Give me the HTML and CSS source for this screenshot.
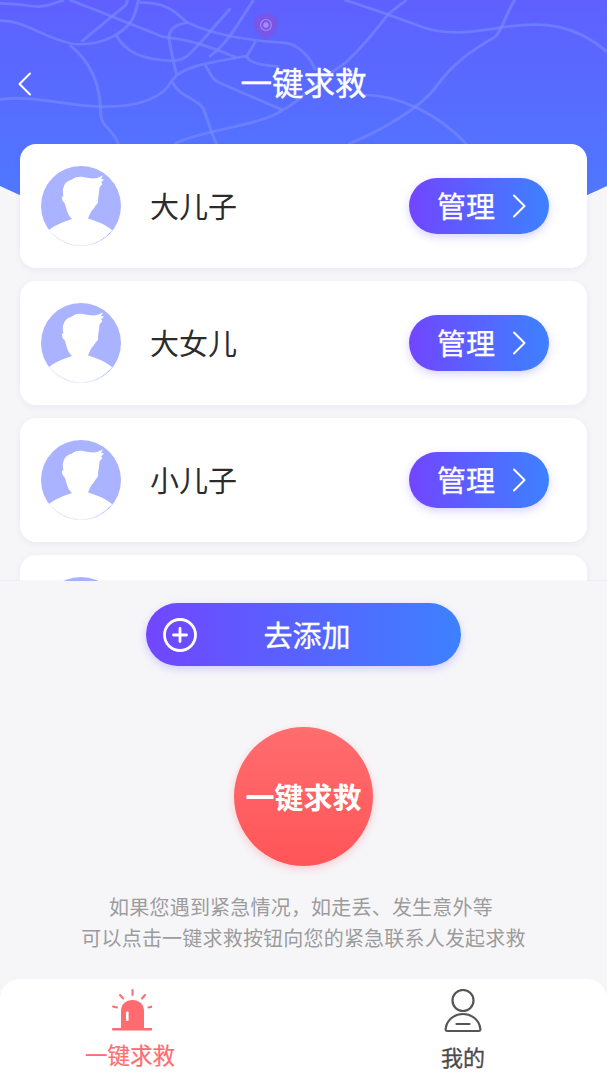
FILE: index.html
```html
<!DOCTYPE html>
<html>
<head>
    <meta charset="utf-8">
    <title>一键求救</title>
    <link rel="stylesheet" href="styles.css">
</head>
<body>
<svg class="defs" width="0" height="0">
    <defs>
        <symbol id="avatar" viewBox="0 0 80 80">
            <circle cx="40" cy="40" r="40" fill="#a9b3ff"/>
            <path fill="#fff" d="M8 64C13 60 21 56 31 53C29 51 27.500 49 26.500 46.500C25.500 43 24.500 39.500 23.500 37C22 36 21 34 21 32C21 30.500 21.500 30 22.500 30.500C21.500 27 21.500 23 23 20C24.500 16 27.500 14.500 31 13.500C34 11 38 10.500 42 11C47 12 52 13 56 12L62 9.500L60 13L63 13.500L60 16.500L61.500 18L58.500 21.500L58 27C57.500 29.500 57 32 57 34.500C57.500 36 56.500 38 55 39C53.500 41.500 52 43.500 50.500 45C49 47.500 48 50 47 52.500C56 55 65 59 71 64C62 74 52 79.500 40 79.500C28 79.500 17 74 8 64Z"/>
            <path fill="none" stroke="#f1f2ff" d="M8 64C17 74 28 79.500 40 79.500C52 79.500 62 74 71 64"/>
        </symbol>
        <symbol id="chevron" viewBox="0 0 14 24">
            <path d="M2 1.500L12.500 12L2 22.500" fill="none" stroke="#fff" stroke-width="2" stroke-linecap="round" stroke-linejoin="round"/>
        </symbol>
    </defs>
</svg>

<div class="page">
    <div class="hero">
        <svg class="map" viewBox="0 0 1568 600" preserveAspectRatio="none">
            <g fill="none" stroke="#7688ff" stroke-width="8" stroke-opacity=".7">
                <path d="M0 10C40 10 70 18 100 20C130 18 150 5 165 0"/>
                <path d="M0 62C70 62 110 115 190 132C260 138 340 100 352 25L358 0"/>
                <path d="M0 298C100 285 170 320 270 320C360 320 420 295 445 240C470 200 530 190 637 168"/>
                <path d="M180 0C240 25 330 70 420 110C480 120 510 125 610 172"/>
                <path d="M360 8C420 5 450 30 480 65C540 100 620 120 730 128C770 130 800 170 815 210"/>
                <path d="M655 0C620 60 590 130 540 170"/>
                <path d="M210 125L325 15L330 0"/>
                <path d="M300 105C320 150 360 180 440 182C480 185 490 160 520 125L595 25"/>
                <path d="M485 68C440 75 435 100 437 120C445 170 450 200 457 225"/>
                <path d="M445 245C460 290 510 295 525 325C540 370 545 400 560 432"/>
                <path d="M180 135C240 190 260 260 260 340C260 380 295 390 305 432"/>
                <path d="M660 125L637 170C650 195 690 195 720 200"/>
                <path d="M530 195C550 235 550 240 570 250L730 330"/>
                <path d="M450 432C520 390 680 375 730 330C770 310 800 260 890 190C940 140 970 90 1005 40L1050 0"/>
                <path d="M890 0C960 25 1030 55 1100 85C1170 110 1250 90 1310 80C1400 65 1480 70 1568 155"/>
                <path d="M1330 0C1310 30 1300 85 1280 110C1220 150 1170 190 1130 255C1090 320 990 390 900 432"/>
                <path d="M940 285C1030 285 1130 340 1205 432"/>
            </g>
            <path fill="#8a4fd8" fill-opacity=".6" d="M687 40C665 40 656 58 656 75C656 92 675 108 687 122C699 108 718 92 718 75C718 58 709 40 687 40Z"/>
            <ellipse cx="687" cy="75" rx="14" ry="16.500" fill="none" stroke="#a98af0" stroke-width="3"/>
            <ellipse cx="687" cy="75" rx="7" ry="8" fill="#a98af0"/>
        </svg>
    </div>

    <header class="topbar">
        <svg class="back" width="14" height="24"><use href="#chevron" transform="matrix(-1 0 0 1 14 0)"/></svg>
        <h1 class="title">一键求救</h1>
    </header>

    <div class="list">
        <div class="card">
            <svg class="avatar"><use href="#avatar"/></svg>
            <span class="name">大儿子</span>
            <a class="manage">管理<svg class="arrow"><use href="#chevron"/></svg></a>
        </div>
        <div class="card">
            <svg class="avatar"><use href="#avatar"/></svg>
            <span class="name">大女儿</span>
            <a class="manage">管理<svg class="arrow"><use href="#chevron"/></svg></a>
        </div>
        <div class="card">
            <svg class="avatar"><use href="#avatar"/></svg>
            <span class="name">小儿子</span>
            <a class="manage">管理<svg class="arrow"><use href="#chevron"/></svg></a>
        </div>
        <div class="card">
            <svg class="avatar"><use href="#avatar"/></svg>
        </div>
    </div>

    <div class="panel">
        <button class="add">
            <svg class="add-icon" width="34" height="34" viewBox="0 0 34 34">
                <circle cx="17" cy="17" r="15.500" fill="none" stroke="#fff" stroke-width="2.800"/>
                <path d="M17 10.500V23.500M10.500 17H23.500" stroke="#fff" stroke-width="2.800" stroke-linecap="round"/>
            </svg>
            <span class="add-label">去添加</span>
        </button>
        <button class="sos">一键求救</button>
        <p class="tip"><span class="tip-first">如果您遇到紧急情况，如走丢、发生意外等</span>可以点击一键求救按钮向您的紧急联系人发起求救</p>
    </div>

    <nav class="tabs">
        <div class="tab active">
            <svg class="tab-icon" width="44" height="44" viewBox="-4 0 44 44">
                <path fill="#ff6b6f" d="M9 40V22C9 15 14 11 20.500 11C27 11 32 15 32 22V40Z"/>
                <rect x="0" y="39" width="42" height="2.400" rx="1" fill="#ff6b6f"/>
                <rect x="14" y="22.500" width="2.600" height="9.500" rx="1" fill="#fff"/>
                <path d="M20.500 1V6M8 6L11 9.500M33 6L30 9.500M1 17.500L5 18.500M40.500 17.500L36.500 18.500" stroke="#ff6b6f" stroke-width="2" stroke-linecap="round"/>
            </svg>
            <span class="tab-label">一键求救</span>
        </div>
        <div class="tab">
            <svg class="tab-icon" width="44" height="44" viewBox="0 0 44 44">
                <circle cx="22" cy="11.500" r="10.500" fill="none" stroke="#555" stroke-width="2.200"/>
                <path d="M6 42C4.500 42 4.500 40.500 4.800 39C6 31 13 25 22 25C31 25 38 31 39.200 39C39.500 40.500 39.500 42 38 42Z" fill="none" stroke="#555" stroke-width="2.200" stroke-linejoin="round"/>
                <path d="M15.500 35H28.500" stroke="#555" stroke-width="2.200" stroke-linecap="round"/>
            </svg>
            <span class="tab-label">我的</span>
        </div>
    </nav>
</div>
</body>
</html>
```

FILE: styles.css
```css
* {
    box-sizing: border-box;
}

html, body {
    margin: 0;
    padding: 0;
}

body {
    font-family: "Noto Sans CJK SC", "Noto Sans", sans-serif;
    background-color: #f6f6f9;
    overflow: hidden;
}

.defs {
    display: block;
    height: 0;
}

.page {
    position: relative;
    width: 607px;
    height: 1080px;
    overflow: hidden;
    display: flex;
    flex-direction: column;
}

.hero {
    position: absolute;
    top: 0;
    left: -100px;
    width: 807px;
    height: 244px;
    border-radius: 0 0 403px 403px / 0 0 170px 170px;
    background: linear-gradient(180deg, #5f60ff 0%, #4e79ff 85%);
    overflow: hidden;
}

.map {
    position: absolute;
    top: 0;
    left: 100px;
    width: 607px;
    height: 200px;
}

.topbar {
    position: relative;
    height: 144px;
    flex: none;
    display: flex;
    justify-content: center;
    padding-top: 58px;
}

.back {
    position: absolute;
    left: 18px;
    top: 72px;
}

.title {
    margin: 0;
    color: #fff;
    font-size: 31.500px;
    font-weight: 400;
    -webkit-text-stroke: .4px #fff;
    line-height: 46px;
}

.list {
    position: relative;
    height: 437px;
    flex: none;
    padding: 0 20px;
    overflow: hidden;
}

.card {
    height: 124px;
    margin-bottom: 13px;
    padding: 0 38px 0 21px;
    display: flex;
    align-items: center;
    background-color: #fff;
    border-radius: 16px;
    box-shadow: 0 2px 6px rgba(90, 90, 140, .08);
}

.avatar {
    width: 80px;
    height: 80px;
    flex: none;
}

.name {
    flex: 1;
    margin-left: 29px;
    padding-bottom: 3px;
    color: #2b2b2b;
    font-size: 29px;
}

.manage {
    width: 140px;
    height: 56px;
    padding: 0 0 3px 28px;
    display: flex;
    align-items: center;
    color: #fff;
    font-size: 29px;
    -webkit-text-stroke: .3px #fff;
    border-radius: 28px;
    background: linear-gradient(90deg, #7146ff, #3d81ff);
    box-shadow: 0 3px 8px rgba(100, 80, 255, .25);
}

.arrow {
    width: 14px;
    height: 24px;
    margin: 3px 0 0 17px;
}

.panel {
    position: relative;
    height: 398px;
    flex: none;
    padding-top: 22px;
    display: flex;
    flex-direction: column;
    align-items: center;
    background-color: #f6f6f9;
    box-shadow: 0 -1px 1px rgba(90, 90, 140, .04);
}

.add {
    width: 315px;
    height: 63px;
    padding: 0 44px 2px 17px;
    display: flex;
    align-items: center;
    border: 0;
    border-radius: 32px;
    color: #fff;
    font-family: inherit;
    font-size: 29px;
    -webkit-text-stroke: .3px #fff;
    background: linear-gradient(90deg, #7146ff, #3d81ff);
    box-shadow: 0 3px 8px rgba(100, 80, 255, .25);
}

.add-icon {
    flex: none;
    margin-top: 2px;
}

.add-label {
    flex: 1;
    text-align: center;
}

.sos {
    width: 139px;
    height: 139px;
    margin-top: 61px;
    padding: 0 0 2px;
    border: 0;
    border-radius: 50%;
    color: #fff;
    font-family: inherit;
    font-size: 29px;
    font-weight: 700;
    white-space: nowrap;
    background: linear-gradient(180deg, #ff6d6f, #ff5558);
    box-shadow: 0 3px 8px rgba(255, 85, 88, .25);
}

.tip {
    margin: 24.500px 0 0;
    color: #9c9c9c;
    font-size: 20px;
    letter-spacing: .2px;
    line-height: 31px;
    text-align: center;
}

.tip-first {
    display: block;
    padding-right: 5px;
}

.tabs {
    position: relative;
    flex: 1;
    padding-left: 80px;
    display: flex;
    gap: 233px;
    background-color: #fff;
    border-radius: 20px 20px 0 0;
}

.tab {
    width: 100px;
    padding-top: 10px;
    display: flex;
    flex-direction: column;
    align-items: center;
    color: #4b4b4b;
}

.tab-icon {
    flex: none;
}

.tab-label {
    margin-top: 8px;
    font-size: 22px;
    -webkit-text-stroke: .3px #4b4b4b;
    line-height: 30px;
    white-space: nowrap;
}

.tab.active {
    color: #ff6b6f;
}

.tab.active .tab-label {
    margin-top: 6px;
    font-size: 22.500px;
    -webkit-text-stroke: .2px #ff6b6f;
}
```
